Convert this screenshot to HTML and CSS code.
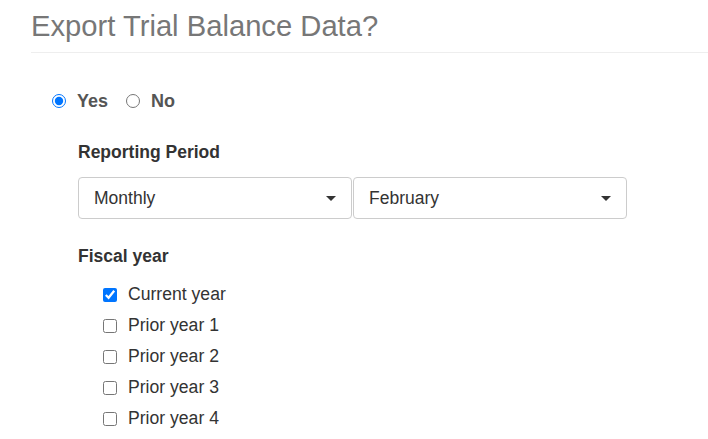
FILE: index.html
```html
<!DOCTYPE html>
<html>
<head>
<meta charset="utf-8">
<link rel="stylesheet" href="styles.css">
</head>
<body>
<div class="page">
  <h3 class="title">Export Trial Balance Data?</h3>
  <div class="radios">
    <label class="radio"><input type="radio" name="exp" checked><span>Yes</span></label>
    <label class="radio"><input type="radio" name="exp"><span>No</span></label>
  </div>
  <div class="section">
    <div class="label">Reporting Period</div>
    <div class="selects">
      <div class="select"><span>Monthly</span><i class="caret"></i></div>
      <div class="select"><span>February</span><i class="caret"></i></div>
    </div>
    <div class="label fiscal">Fiscal year</div>
    <div class="checks">
      <label class="check"><input type="checkbox" checked><span>Current year</span></label>
      <label class="check"><input type="checkbox"><span>Prior year 1</span></label>
      <label class="check"><input type="checkbox"><span>Prior year 2</span></label>
      <label class="check"><input type="checkbox"><span>Prior year 3</span></label>
      <label class="check"><input type="checkbox"><span>Prior year 4</span></label>
    </div>
  </div>
</div>
</body>
</html>
```
FILE: styles.css
```css
html, body { margin: 0; padding: 0; background: #fff; }
body { font-family: "Liberation Sans", Arial, sans-serif; color: #333; }
.page { padding-left: 31px; }
.title {
  margin: 0;
  padding-top: 8px;
  font-size: 29.2px;
  font-weight: 400;
  line-height: 36px;
  color: #777;
  padding-bottom: 8px;
  border-bottom: 1px solid #eee;
}
.radios { display: flex; align-items: center; margin-top: 37px; padding-left: 21px; height: 22px; }
.radio { display: flex; align-items: center; font-weight: 700; font-size: 18px; color: #555; margin-right: 18px; }
.radio input { width: 14px; height: 14px; margin: 0 11px 0 0; accent-color: #0075ff; }
.section { padding-left: 47px; }
.label { font-weight: 700; font-size: 17.5px; color: #333; margin-top: 30px; line-height: 20px; }
.selects { display: flex; margin-top: 15px; width: 550px; }
.select {
  width: 274px; height: 42px; box-sizing: border-box;
  border: 1px solid #ccc; border-radius: 4px;
  display: flex; align-items: center; justify-content: space-between;
  padding: 0 15px 0 15px; font-size: 17.5px; color: #333;
  margin-right: 1px;
}
.caret { width: 0; height: 0; border-left: 5px solid transparent; border-right: 5px solid transparent; border-top: 5px solid #333; }
.fiscal { margin-top: 27px; }
.checks { margin-top: 13px; padding-left: 25px; }
.check { display: flex; align-items: center; height: 31px; font-size: 17.6px; color: #333; }
.check input { width: 14px; height: 14px; margin: 0 11px 0 0; accent-color: #0075ff; }
```
